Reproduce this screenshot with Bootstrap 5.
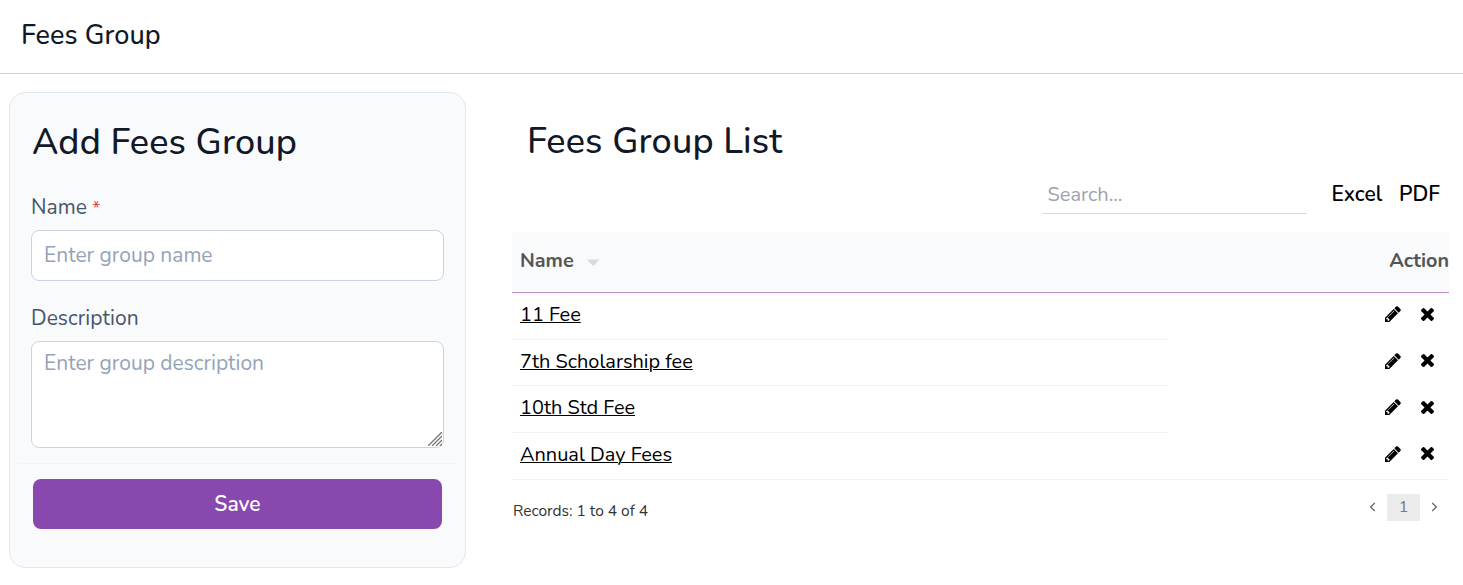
<!DOCTYPE html>
<html lang="en">
<head>
<meta charset="utf-8">
<meta name="viewport" content="width=device-width, initial-scale=1">
<title>Fees Group</title>
<link rel="stylesheet" href="https://cdn.jsdelivr.net/npm/bootstrap@5.3.0/dist/css/bootstrap.min.css">
<style>
  body { font-family: Nunito, Lato, sans-serif; font-size: 20px; line-height: 30px; color: #000; background: #fff; overflow: hidden; }
  .page-head { height: 74px; border-bottom: 1px solid #cbd5e1; padding: 0 21px 1px; }
  .page-head h1 { font-size: 27px; font-weight: 500; line-height: 36px; letter-spacing: .08px; color: #111827; }
  .page-body { padding: 18px 14px 0 9px; gap: 46px; }
  .form-panel { width: 457px; height: 476px; background: #f8fafc; border: 1px solid #e2e8f0; border-radius: 16px; padding: 26px 8px 0; }
  .section-title { font-size: 36px; font-weight: 500; line-height: 48px; letter-spacing: .15px; color: #111827; }
  .form-panel .section-title { padding-left: 14px; }
  .fields { padding: 24px 13px 15px; border-bottom: 1px solid #f1f5f9; }
  .fields label { display: block; font-size: 21px; line-height: 32px; color: #475569; }
  .fields .req { color: #ef4444; font-size: 18px; line-height: 1; }
  .fields .field-name { margin-bottom: 21px; }
  .fields .field-name label { margin-bottom: 7px; }
  .fields .field-desc label { margin-bottom: 7px; letter-spacing: .05px; }
  .fields .form-control { border: 1px solid #cbd5e1; border-radius: 8px; font-size: 21px; line-height: 32px; padding: 7px 12px 9px; color: #475569; }
  .fields .form-control::placeholder { color: #94a3b8; opacity: 1; }
  .fields input.form-control { height: 51px; }
  .fields textarea.form-control { height: 107px; padding-top: 5px; resize: none; }
  .grip { right: 2px; bottom: 2px; }
  .btn-save { display: block; width: 409px; height: 50px; margin: 15px 0 0 15px; background: #8848ae; color: #fff; border: 0; border-radius: 8px; font-size: 21px; font-weight: 600; line-height: 30px; }
  .list-panel { padding-top: 26px; }
  .list-panel .section-title { padding-left: 15px; }
  .tools { height: 66px; padding: 7px 9px 0 0; }
  .search { width: 265px; height: 41px; border: 0; border-bottom: 1px solid #d9d9d9; border-radius: 0; padding: 2px 5px 0; font-size: 20px; margin-right: 24px; }
  .search::placeholder { color: #9ca3af; opacity: 1; }
  .export { color: #000; font-weight: 600; font-size: 21px; text-decoration: none; line-height: 42px; }
  .export + .export { margin-left: 17px; }
  .fee-table { margin: 0; border-collapse: separate; border-spacing: 0; table-layout: fixed; color: #000; --bs-table-bg: transparent; }
  .fee-table > thead th { height: 61px; padding: 0 0 3px 8px; background: #f8fafc; border-bottom: 1px solid #c094d4; font-weight: 700; font-size: 19.8px; color: #555; vertical-align: middle; }
  .fee-table > thead th.act { padding: 0 0 3px; text-align: right; }
  .fee-table > tbody td { height: 46.67px; padding: 0 0 1.5px 8px; border: 0; vertical-align: middle; line-height: 30px; }
  .fee-table > tbody td:last-child { padding-bottom: 4.3px; }
  .fee-table > tbody td:first-child, .fee-table > tbody tr:last-child td { border-bottom: 1px solid #f3f3f3; }
  .fee-table a { color: #000; font-size: 19.95px; text-decoration-thickness: 1px; }
  .acts { gap: 20px; padding-right: 15px; }
  .acts svg, .caret { display: block; }
  .pager { font-size: 15.5px; color: #333; padding: 14px 10px 0 1px; }
  .pager .records { padding-top: 7px; }
  .pager .cur { width: 33px; height: 27px; background: #ebebeb; color: #777; font-size: 16px; line-height: 27px; margin: 0 9px; text-align: center; }
</style>
</head>
<body>
<svg class="d-none" xmlns="http://www.w3.org/2000/svg">
  <symbol id="pencil" viewBox="0 0 1536 1536"><path d="M363 1408l91-91-235-235-91 91v107h128v128h107zM886 480q0-22-22-22-10 0-17 7L305 1007q-7 7-7 17 0 22 22 22 10 0 17-7l542-542q7-7 7-17zM832 288l416 416-832 832H0v-416zm683 96q0 53-37 90l-166 166-416-416 166-165q36-38 90-38 53 0 91 38l235 234q37 39 37 91z"/></symbol>
  <symbol id="cross" viewBox="0 0 1188 1188"><path d="M1188 956q0 40-28 68l-136 136q-28 28-68 28t-68-28L594 866l-294 294q-28 28-68 28t-68-28L28 1024Q0 996 0 956t28-68l294-294L28 300Q0 272 0 232t28-68L164 28Q192 0 232 0t68 28l294 294L888 28q28-28 68-28t68 28l136 136q28 28 28 68t-28 68L866 594l294 294q28 28 28 68z"/></symbol>
</svg>

<header class="page-head d-flex align-items-center"><h1 class="m-0">Fees Group</h1></header>

<main class="page-body d-flex">
  <section class="form-panel flex-shrink-0">
    <h2 class="section-title m-0">Add Fees Group</h2>
    <div class="fields">
      <div class="field-name">
        <label for="gname">Name <span class="req">*</span></label>
        <input id="gname" class="form-control" placeholder="Enter group name">
      </div>
      <div class="field-desc position-relative">
        <label for="gdesc">Description</label>
        <textarea id="gdesc" class="form-control d-block" placeholder="Enter group description"></textarea>
        <svg class="grip position-absolute" width="14" height="14" viewBox="0 0 14 14" stroke="#777" stroke-width="1.3"><path d="M0 14 14 0M4 14 14 4M8 14l6-6M12 14l2-2"/></svg>
      </div>
    </div>
    <button class="btn btn-save">Save</button>
  </section>

  <section class="list-panel flex-grow-1">
    <h2 class="section-title m-0">Fees Group List</h2>
    <div class="tools d-flex justify-content-end">
      <input class="search form-control" placeholder="Search...">
      <a class="export" href="#">Excel</a>
      <a class="export" href="#">PDF</a>
    </div>
    <table class="table fee-table w-100">
      <colgroup><col style="width:70%"><col style="width:30%"></colgroup>
      <thead><tr>
        <th><div class="d-flex align-items-center">Name <svg class="caret ms-2 mt-1" width="22" height="7" viewBox="0 0 22 7"><path d="M5 .5h12.6L12 6.5h-1.4z" fill="#d9dadc"/></svg></div></th>
        <th class="act">Action</th>
      </tr></thead>
      <tbody>
        <tr><td><a href="#">11 Fee</a></td><td><div class="acts d-flex align-items-center justify-content-end"><svg width="16" height="16"><use href="#pencil"/></svg><svg width="13" height="13"><use href="#cross"/></svg></div></td></tr>
        <tr><td><a href="#">7th Scholarship fee</a></td><td><div class="acts d-flex align-items-center justify-content-end"><svg width="16" height="16"><use href="#pencil"/></svg><svg width="13" height="13"><use href="#cross"/></svg></div></td></tr>
        <tr><td><a href="#">10th Std Fee</a></td><td><div class="acts d-flex align-items-center justify-content-end"><svg width="16" height="16"><use href="#pencil"/></svg><svg width="13" height="13"><use href="#cross"/></svg></div></td></tr>
        <tr><td><a href="#">Annual Day Fees</a></td><td><div class="acts d-flex align-items-center justify-content-end"><svg width="16" height="16"><use href="#pencil"/></svg><svg width="13" height="13"><use href="#cross"/></svg></div></td></tr>
      </tbody>
    </table>
    <div class="pager d-flex align-items-start justify-content-between">
      <span class="records lh-sm">Records: 1 to 4 of 4</span>
      <div class="d-flex align-items-center">
        <svg width="10" height="10" viewBox="0 0 10 10" fill="none" stroke="#666" stroke-width="1.3"><path d="M6.8 1 2.6 5l4.2 4"/></svg>
        <span class="cur">1</span>
        <svg width="10" height="10" viewBox="0 0 10 10" fill="none" stroke="#666" stroke-width="1.3"><path d="M3.2 1l4.2 4-4.2 4"/></svg>
      </div>
    </div>
  </section>
</main>
<script src="https://cdn.jsdelivr.net/npm/bootstrap@5.3.0/dist/js/bootstrap.bundle.min.js"></script>
</body>
</html>
